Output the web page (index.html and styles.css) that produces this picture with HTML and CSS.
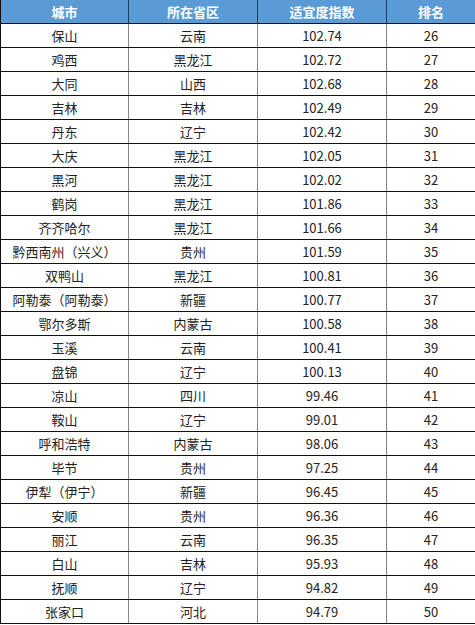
FILE: index.html
```html
<!DOCTYPE html>
<html lang="zh">
<head>
<meta charset="utf-8">
<link rel="stylesheet" href="styles.css">
</head>
<body>
<table class="rank">
<colgroup><col class="c1"><col class="c2"><col class="c3"><col class="c4"></colgroup>
<thead>
<tr><th>城市</th><th>所在省区</th><th>适宜度指数</th><th>排名</th></tr>
</thead>
<tbody>
<tr><td>保山</td><td>云南</td><td>102.74</td><td>26</td></tr>
<tr><td>鸡西</td><td>黑龙江</td><td>102.72</td><td>27</td></tr>
<tr><td>大同</td><td>山西</td><td>102.68</td><td>28</td></tr>
<tr><td>吉林</td><td>吉林</td><td>102.49</td><td>29</td></tr>
<tr><td>丹东</td><td>辽宁</td><td>102.42</td><td>30</td></tr>
<tr><td>大庆</td><td>黑龙江</td><td>102.05</td><td>31</td></tr>
<tr><td>黑河</td><td>黑龙江</td><td>102.02</td><td>32</td></tr>
<tr><td>鹤岗</td><td>黑龙江</td><td>101.86</td><td>33</td></tr>
<tr><td>齐齐哈尔</td><td>黑龙江</td><td>101.66</td><td>34</td></tr>
<tr><td>黔西南州（兴义）</td><td>贵州</td><td>101.59</td><td>35</td></tr>
<tr><td>双鸭山</td><td>黑龙江</td><td>100.81</td><td>36</td></tr>
<tr><td>阿勒泰（阿勒泰）</td><td>新疆</td><td>100.77</td><td>37</td></tr>
<tr><td>鄂尔多斯</td><td>内蒙古</td><td>100.58</td><td>38</td></tr>
<tr><td>玉溪</td><td>云南</td><td>100.41</td><td>39</td></tr>
<tr><td>盘锦</td><td>辽宁</td><td>100.13</td><td>40</td></tr>
<tr><td>凉山</td><td>四川</td><td>99.46</td><td>41</td></tr>
<tr><td>鞍山</td><td>辽宁</td><td>99.01</td><td>42</td></tr>
<tr><td>呼和浩特</td><td>内蒙古</td><td>98.06</td><td>43</td></tr>
<tr><td>毕节</td><td>贵州</td><td>97.25</td><td>44</td></tr>
<tr><td>伊犁（伊宁）</td><td>新疆</td><td>96.45</td><td>45</td></tr>
<tr><td>安顺</td><td>贵州</td><td>96.36</td><td>46</td></tr>
<tr><td>丽江</td><td>云南</td><td>96.35</td><td>47</td></tr>
<tr><td>白山</td><td>吉林</td><td>95.93</td><td>48</td></tr>
<tr><td>抚顺</td><td>辽宁</td><td>94.82</td><td>49</td></tr>
<tr><td>张家口</td><td>河北</td><td>94.79</td><td>50</td></tr>
</tbody>
</table>
</body>
</html>
```
FILE: styles.css
```css
html, body {
  margin: 0;
  padding: 0;
  background: #ffffff;
}
.rank {
  border-collapse: collapse;
  table-layout: fixed;
  width: 475px;
  font-family: "Noto Sans CJK SC", "Noto Sans", sans-serif;
  font-size: 13px;
  color: #222;
}
.c1 { width: 128px; }
.c2 { width: 129px; }
.c3 { width: 129px; }
.c4 { width: 89px; }
.rank th, .rank td {
  height: 23px;
  padding: 0;
  text-align: center;
  vertical-align: middle;
  line-height: 16px;
  white-space: nowrap;
}
.rank th {
  background: #5b9bd5;
  color: #ffffff;
  font-weight: bold;
  border: 1px solid #1f3a5a;
  border-top: none;
  border-bottom: 1px solid #111;
}
.rank td {
  border-top: 1px solid #111;
  border-bottom: 1px solid #111;
  border-left: 1px solid #888;
  border-right: 1px solid #888;
}
.rank td:first-child, .rank th:first-child { border-left: 1px solid #111; }
.rank td:last-child, .rank th:last-child { border-right: 1px solid #111; }
```
